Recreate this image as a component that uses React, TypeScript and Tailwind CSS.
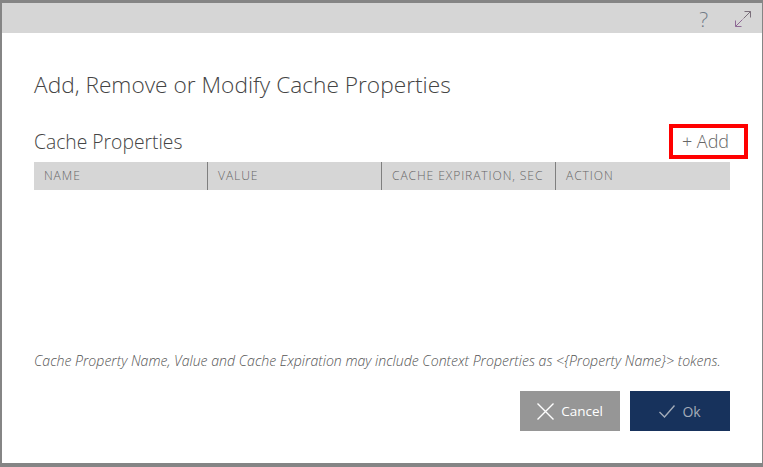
const font = "font-['Open_Sans',sans-serif]";

function HelpAndResize() {
  return (
    <div className="flex h-[30px] shrink-0 items-center justify-end bg-[#d6d6d6]">
      <span className="mr-[27px] mt-[2px] text-[21px] font-light leading-none text-[#6f7a86]">?</span>
      <svg width="16" height="16" viewBox="0 0 16 16" fill="none" className="mr-[11px] mt-[2px]" strokeWidth="1">
        <path d="M8.5 7.5 15.5 .5M9.5 .5H15.5V6.5" stroke="#7a6f7a" />
        <path d="M7.5 8.5 .5 15.5M.5 9.5V15.5H6.5" stroke="#8f6a96" />
      </svg>
    </div>
  );
}

function HeaderCell({ label, width, last }: { label: string; width: string; last?: boolean }) {
  return (
    <div className={`flex h-full items-center pl-[10px] ${width} ${last ? '' : 'border-r border-[#7f7f7f]'}`}>
      {label}
    </div>
  );
}

export default function App() {
  return (
    <div className={`${font} h-[467px] w-[763px] overflow-hidden bg-[#858585] pb-[4px] pl-[2px] pr-[1px] pt-[3px]`}>
      <div className="flex h-full flex-col bg-white">
        <HelpAndResize />
        <div className="flex flex-1 flex-col pl-[32px] pr-[32px]">
          <h1 className="mt-[37px] text-[22.7px] font-light leading-[30px] text-[#444444]">
            Add, Remove or Modify Cache Properties
          </h1>

          <div className="mt-[24px] flex h-[35px] items-center justify-between">
            <h2 className="text-[19.3px] font-light leading-[24px] text-[#444444]">Cache Properties</h2>
            <button className="-mr-[18px] flex h-[35px] w-[79px] items-center justify-center border-[4px] border-[#ff0000] pr-[6px] text-[18px] font-light text-[#666666]">
              + Add
            </button>
          </div>

          <div className="mt-[3px] flex h-[28px] items-center bg-[#d6d6d6] text-[12.1px] font-light tracking-[0.9px] text-[#666666]">
            <HeaderCell label="NAME" width="w-[174px]" />
            <HeaderCell label="VALUE" width="w-[174px]" />
            <HeaderCell label="CACHE EXPIRATION, SEC" width="w-[174px]" />
            <HeaderCell label="ACTION" width="w-[174px]" last />
          </div>

          <p className="mt-[162px] whitespace-nowrap text-[14.1px] font-light italic leading-[18px] text-[#555555]">
            {'Cache Property Name, Value and Cache Expiration may include Context Properties as <{Property Name}> tokens.'}
          </p>

          <div className="mt-[21px] flex justify-end gap-[10px]">
            <button className="flex h-[40px] w-[100px] items-center justify-center gap-[7px] bg-[#969696] text-[13.5px] font-medium text-white">
              <svg width="17" height="17" viewBox="0 0 17 17" fill="none" stroke="#ffffff" strokeWidth="1.4">
                <path d="M.5 .5 16.5 16.5M16.5 .5 .5 16.5" />
              </svg>
              Cancel
            </button>
            <button className="flex h-[40px] w-[100px] items-center justify-center gap-[7px] bg-[#17325c] text-[14px] text-[#a3acb9]">
              <svg width="16" height="13" viewBox="0 0 16 13" fill="none" stroke="#a3acb9" strokeWidth="1.4">
                <path d="M.5 7 5.5 12 15.5 .5" />
              </svg>
              Ok
            </button>
          </div>
        </div>
      </div>
    </div>
  );
}
